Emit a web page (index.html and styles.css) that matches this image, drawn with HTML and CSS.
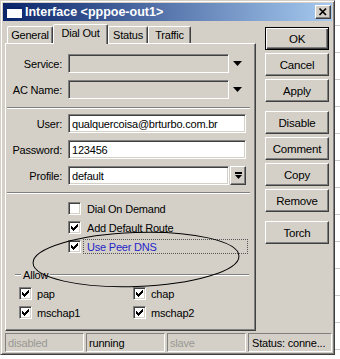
FILE: index.html
```html
<!DOCTYPE html>
<html>
<head>
<meta charset="utf-8">
<link rel="stylesheet" href="styles.css">
</head>
<body>
<div class="screen">
  <div class="window">
    <div class="titlebar">
      <svg class="appicon" width="15" height="11" viewBox="0 0 15 11"><rect x="0" y="0" width="15" height="11" fill="#fff"/><rect x="0" y="0" width="15" height="2" fill="#0a246a"/></svg>
      <span class="title">Interface &lt;pppoe-out1&gt;</span>
      <div class="closebtn"><svg width="14" height="12" viewBox="0 0 14 12"><path d="M3.5 2.5 L10 9 M10 2.5 L3.5 9" stroke="#000" stroke-width="1.7" fill="none"/></svg></div>
    </div>
    <div class="main">
      <div class="leftcol">
        <div class="tabs">
          <div class="tab t-general">General</div>
          <div class="tab active t-dial">Dial Out</div>
          <div class="tab t-status">Status</div>
          <div class="tab t-traffic">Traffic</div>
        </div>
        <div class="panel">
          <div class="row r-service"><span class="lbl">Service:</span><div class="field disabled w-short"></div><svg class="arrow" width="9" height="5" viewBox="0 0 9 5"><polygon points="0,0 9,0 4.5,5" fill="#000"/></svg></div>
          <div class="row r-gap7"><span class="lbl">AC Name:</span><div class="field disabled w-short"></div><svg class="arrow" width="9" height="5" viewBox="0 0 9 5"><polygon points="0,0 9,0 4.5,5" fill="#000"/></svg></div>
          <div class="sep s-first"></div>
          <div class="row r-user"><span class="lbl">User:</span><div class="field w-long">qualquercoisa@brturbo.com.br</div></div>
          <div class="row r-gap7"><span class="lbl">Password:</span><div class="field w-long">123456</div></div>
          <div class="row r-gap7"><span class="lbl">Profile:</span><div class="field w-short">default</div><div class="dropbtn"><svg width="7" height="8" viewBox="0 0 7 8"><rect x="0" y="0" width="7" height="2" fill="#000"/><polygon points="0,3 7,3 3.5,7" fill="#000"/></svg></div></div>
          <div class="sep s-second"></div>
          <div class="cbrow cb-first"><span class="cb"></span><span class="cblbl">Dial On Demand</span></div>
          <div class="cbrow"><span class="cb checked"><svg width="7" height="7" viewBox="0 0 7 7"><path d="M6 0h1v1h-1zM5 1h2v1h-2zM0 2h1v1h-1zM4 2h3v1h-3zM0 3h2v1h-2zM3 3h3v1h-3zM0 4h5v1h-5zM1 5h3v1h-3zM2 6h1v1h-1z" fill="#000"/></svg></span><span class="cblbl">Add Default Route</span></div>
          <div class="cbrow"><span class="cb checked"><svg width="7" height="7" viewBox="0 0 7 7"><path d="M6 0h1v1h-1zM5 1h2v1h-2zM0 2h1v1h-1zM4 2h3v1h-3zM0 3h2v1h-2zM3 3h3v1h-3zM0 4h5v1h-5zM1 5h3v1h-3zM2 6h1v1h-1z" fill="#000"/></svg></span><span class="cblbl focused">Use Peer DNS</span></div>
          <div class="grouphead"><span class="gline gl-short"></span><span class="gtitle">Allow</span><span class="gline gl-long"></span></div>
          <div class="allowgrid">
            <div class="acell"><span class="cb checked"><svg width="7" height="7" viewBox="0 0 7 7"><path d="M6 0h1v1h-1zM5 1h2v1h-2zM0 2h1v1h-1zM4 2h3v1h-3zM0 3h2v1h-2zM3 3h3v1h-3zM0 4h5v1h-5zM1 5h3v1h-3zM2 6h1v1h-1z" fill="#000"/></svg></span><span class="alabel">pap</span></div>
            <div class="acell"><span class="cb checked"><svg width="7" height="7" viewBox="0 0 7 7"><path d="M6 0h1v1h-1zM5 1h2v1h-2zM0 2h1v1h-1zM4 2h3v1h-3zM0 3h2v1h-2zM3 3h3v1h-3zM0 4h5v1h-5zM1 5h3v1h-3zM2 6h1v1h-1z" fill="#000"/></svg></span><span class="alabel">chap</span></div>
            <div class="acell"><span class="cb checked"><svg width="7" height="7" viewBox="0 0 7 7"><path d="M6 0h1v1h-1zM5 1h2v1h-2zM0 2h1v1h-1zM4 2h3v1h-3zM0 3h2v1h-2zM3 3h3v1h-3zM0 4h5v1h-5zM1 5h3v1h-3zM2 6h1v1h-1z" fill="#000"/></svg></span><span class="alabel">mschap1</span></div>
            <div class="acell"><span class="cb checked"><svg width="7" height="7" viewBox="0 0 7 7"><path d="M6 0h1v1h-1zM5 1h2v1h-2zM0 2h1v1h-1zM4 2h3v1h-3zM0 3h2v1h-2zM3 3h3v1h-3zM0 4h5v1h-5zM1 5h3v1h-3zM2 6h1v1h-1z" fill="#000"/></svg></span><span class="alabel">mschap2</span></div>
          </div>
          <svg class="ellipse" width="251" height="288" viewBox="0 0 251 288"><ellipse cx="131" cy="216.5" rx="103" ry="27" transform="rotate(-2 131 216.5)" fill="none" stroke="#000" stroke-width="1"/></svg>
        </div>
      </div>
      <div class="buttons">
        <div class="btn default">OK</div>
        <div class="btn">Cancel</div>
        <div class="btn">Apply</div>
        <div class="btn grp">Disable</div>
        <div class="btn">Comment</div>
        <div class="btn">Copy</div>
        <div class="btn">Remove</div>
        <div class="btn grp">Torch</div>
      </div>
    </div>
    <div class="statusbar">
      <div class="sfield dim">disabled</div>
      <div class="sfield">running</div>
      <div class="sfield dim">slave</div>
      <div class="sfield wide">Status: conne...</div>
    </div>
  </div>
  <div class="strip"></div>
</div>
</body>
</html>
```

FILE: styles.css
```css
* { box-sizing: border-box; }
html, body { margin: 0; padding: 0; background: #fff; }
body {
  font-family: "Liberation Sans", Arial, sans-serif;
  font-size: 11px;
  letter-spacing: -0.2px;
  color: #000;
  width: 340px;
  height: 359px;
  overflow: hidden;
}
.screen { display: flex; height: 359px; }
.window {
  width: 335px;
  height: 355px;
  background: #d4d0c8;
  border: 1px solid;
  border-color: #d4d0c8 #404040 #404040 #d4d0c8;
  box-shadow: inset 1px 1px #fff, inset -1px -1px #808080;
  padding: 2px;
  display: flex;
  flex-direction: column;
}
.strip {
  width: 5px;
  height: 359px;
  background: repeating-linear-gradient(to bottom, #fff 0 25px, #c8c8c8 25px 26px, #fff 26px 27px);
}
.titlebar {
  height: 18px;
  background: linear-gradient(to right, #0a246a, #a6caf0);
  display: flex;
  align-items: center;
  padding-left: 4px;
}
.appicon { display: block; flex: 0 0 auto; }
.title {
  color: #fff;
  font-weight: bold;
  font-size: 12.5px;
  letter-spacing: 0;
  margin-left: 3px;
}
.closebtn {
  margin-left: auto;
  margin-right: 1px;
  width: 16px;
  height: 14px;
  background: #d4d0c8;
  border: 1px solid;
  border-color: #fff #404040 #404040 #fff;
  box-shadow: inset -1px -1px #808080;
  display: flex;
  align-items: center;
  justify-content: center;
}
.closebtn svg { display: block; }
.main { display: flex; margin-top: 3px; }
.leftcol { width: 251px; margin-left: 2px; }
.tabs { display: flex; height: 19px; padding-left: 2px; align-items: flex-start; }
.tab {
  margin-top: 2px;
  height: 17px;
  border: 1px solid;
  border-bottom: none;
  border-color: #fff #404040 transparent #fff;
  box-shadow: inset -1px 0 #808080;
  border-radius: 2px 2px 0 0;
  display: flex;
  align-items: center;
  justify-content: center;
  padding-bottom: 1px;
}
.t-general { width: 46px; }
.t-dial { width: 55px; }
.t-status { width: 40px; }
.t-traffic { width: 43px; }
.tab.active {
  margin-top: 0;
  height: 20px;
  position: relative;
  z-index: 2;
  background: #d4d0c8;
  padding-bottom: 4px;
}
.panel {
  position: relative;
  height: 288px;
  border: 1px solid;
  border-color: #fff #404040 #404040 #fff;
  box-shadow: inset -1px -1px #808080;
  padding: 1px;
  display: flex;
  flex-direction: column;
}
.row { display: flex; align-items: center; height: 19px; }
.r-service { margin-top: 9px; }
.r-gap7 { margin-top: 7px; }
.r-user { margin-top: 5px; }
.lbl { width: 55px; text-align: right; margin-right: 6px; color: #000; white-space: nowrap; }
.field {
  height: 19px;
  background: #fff;
  border: 1px solid;
  border-color: #808080 #fff #fff #808080;
  box-shadow: inset 1px 1px #404040, inset -1px -1px #d4d0c8;
  padding: 0 3px;
  display: flex;
  align-items: center;
  white-space: nowrap;
  overflow: hidden;
}
.field.disabled { background: #d4d0c8; }
.w-short { width: 161px; }
.w-long { width: 178px; }
.arrow { display: block; margin-left: 4px; }
.dropbtn {
  width: 16px;
  height: 19px;
  margin-left: 1px;
  border: 1px solid;
  border-color: #fff #404040 #404040 #fff;
  box-shadow: inset -1px -1px #808080;
  display: flex;
  align-items: center;
  justify-content: center;
}
.dropbtn svg { display: block; }
.sep { height: 2px; border-top: 1px solid #808080; border-bottom: 1px solid #fff; margin-right: 4px; }
.s-first { margin-top: 8px; }
.s-second { margin-top: 7px; }
.cbrow { display: flex; align-items: center; height: 19px; padding-left: 61px; }
.cb-first { margin-top: 5px; }
.cb {
  width: 13px;
  height: 13px;
  flex: 0 0 13px;
  background: #fff;
  border: 1px solid;
  border-color: #808080 #fff #fff #808080;
  box-shadow: inset 1px 1px #404040, inset -1px -1px #d4d0c8;
  display: flex;
  align-items: center;
  justify-content: center;
}
.cb svg { display: block; }
.cblbl {
  margin-left: 2px;
  border: 1px solid transparent;
  padding: 0 3px;
  height: 15px;
  display: flex;
  align-items: center;
  white-space: nowrap;
}
.cblbl.focused { width: 165px; border: 1px dotted #555; color: #2424c8; }
.grouphead { display: flex; align-items: center; height: 13px; margin-top: 12px; margin-left: 8px; width: 234px; }
.gline { height: 2px; border-top: 1px solid #808080; border-bottom: 1px solid #fff; }
.gl-short { width: 6px; }
.gl-long { flex: 1; }
.gtitle { padding: 0 2px; }
.allowgrid { display: grid; grid-template-columns: 114px 114px; margin-top: 3px; padding-left: 12px; }
.acell { display: flex; align-items: center; height: 19px; }
.alabel { margin-left: 5px; }
.ellipse { position: absolute; left: -1px; top: -1px; z-index: 3; pointer-events: none; }
.buttons { display: flex; flex-direction: column; gap: 3px; margin-left: 9px; margin-top: 3px; width: 64px; }
.btn {
  height: 23px;
  border: 1px solid;
  border-color: #fff #404040 #404040 #fff;
  box-shadow: inset -1px -1px #808080;
  display: flex;
  align-items: center;
  justify-content: center;
  font-size: 11.5px;
}
.btn.default {
  border-color: #000;
  box-shadow: inset 1px 1px #fff, inset -1px -1px #404040, inset -2px -2px #808080;
}
.btn.grp { margin-top: 6px; }
.statusbar { display: flex; gap: 2px; margin-top: 2px; margin-left: 2px; height: 19px; }
.sfield {
  width: 79px;
  height: 19px;
  border: 1px solid;
  border-color: #808080 #fff #fff #808080;
  padding-left: 2px;
  display: flex;
  align-items: center;
  white-space: nowrap;
  overflow: hidden;
}
.sfield.dim { color: #9a9892; }
.sfield.wide { width: 84px; padding-left: 3px; }
```
